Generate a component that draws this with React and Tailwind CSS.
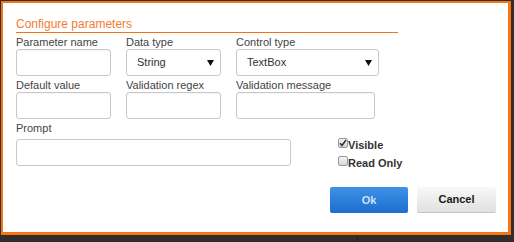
import React from "react";

const Arrow = () => (
    <svg width="7" height="6" viewBox="0 0 7 6" className="shrink-0">
        <path d="M0 0 L7 0 L3.5 6 Z" fill="#111" />
    </svg>
);

const Field = ({ label, width = "w-[95px]" }) => (
    <div className="flex flex-col">
        <div className="text-[11px] leading-[14px] text-[#444]">{label}</div>
        <div className={`${width} h-[27px] bg-white border border-[#c8c8c8] rounded-[3px] shadow-[inset_0_1px_1px_rgba(0,0,0,0.04)]`} />
    </div>
);

const Select = ({ label, value, width = "w-[95px]" }) => (
    <div className="flex flex-col">
        <div className="text-[11px] leading-[14px] text-[#444]">{label}</div>
        <div className={`${width} h-[27px] bg-white border border-[#c8c8c8] rounded-[3px] flex items-center justify-between pl-[10px] pr-[6px]`}>
            <span className="text-[11px] text-[#333]">{value}</span>
            <Arrow />
        </div>
    </div>
);

const Check = ({ label, checked }) => (
    <div className="flex items-start h-[18px] leading-[18px]">
        <span className="mt-[2px] w-[10px] h-[10px] rounded-[2px] border border-[#9a9a9a] bg-gradient-to-b from-[#f4f4f4] to-[#d6d6d6] flex items-center justify-center">
            {checked && (
                <svg width="8" height="8" viewBox="0 0 8 8">
                    <path d="M1 4.2 L3 6.5 L7 1" stroke="#333" strokeWidth="1.6" fill="none" />
                </svg>
            )}
        </span>
        <span className="text-[11px] font-bold text-[#333]">{label}</span>
    </div>
);

export default function App() {
    return (
        <div className="relative w-[514px] h-[242px] bg-[#2e2e2e] pt-px pl-px overflow-hidden font-['Liberation_Sans',Arial,sans-serif]">
            <div className="absolute left-[357px] top-[236px] w-px h-[6px] bg-[#1f1f1f]" />
            <div className="w-[510px] h-[234px] bg-white border-[#f87510] border-l-2 border-t-2 border-r-[3px] border-b-[3px] pl-[13px] pt-[14px]">
                <div className="w-[382px] text-[12px] leading-[14px] text-[#f57c30] pb-px border-b border-[#f57418]">
                    Configure parameters
                </div>

                <div className="grid grid-cols-[95px_95px_143px] gap-x-[15px] mt-[2px]">
                    <Field label="Parameter name" />
                    <Select label="Data type" value="String" />
                    <Select label="Control type" value="TextBox" width="w-[143px]" />
                </div>

                <div className="grid grid-cols-[95px_95px_143px] gap-x-[15px] mt-[2px]">
                    <Field label="Default value" />
                    <Field label="Validation regex" />
                    <Field label="Validation message" width="w-[139px]" />
                </div>

                <div className="flex mt-[2px]">
                    <div className="flex flex-col w-[275px]">
                        <div className="text-[11px] leading-[14px] text-[#444] mb-[4px]">Prompt</div>
                        <div className="w-[275px] h-[27px] bg-white border border-[#c8c8c8] rounded-[3px]" />
                    </div>
                    <div className="flex flex-col ml-[47px] pt-[15px]">
                        <Check label="Visible" checked />
                        <Check label="Read Only" />
                    </div>
                </div>

                <div className="flex gap-[9px] ml-[314px] mt-[15px]">
                    <button className="w-[78px] h-[26px] rounded-[2px] bg-gradient-to-b from-[#3d92e6] to-[#1e6ecf] text-[11px] font-bold text-[#cfe0f6]">
                        Ok
                    </button>
                    <button className="w-[79px] h-[26px] rounded-[2px] bg-gradient-to-b from-[#f8f8f8] to-[#e1e1e1] border-b border-[#c4c4c4] text-[11px] font-bold text-[#1a1a1a]">
                        Cancel
                    </button>
                </div>
            </div>
        </div>
    );
}
